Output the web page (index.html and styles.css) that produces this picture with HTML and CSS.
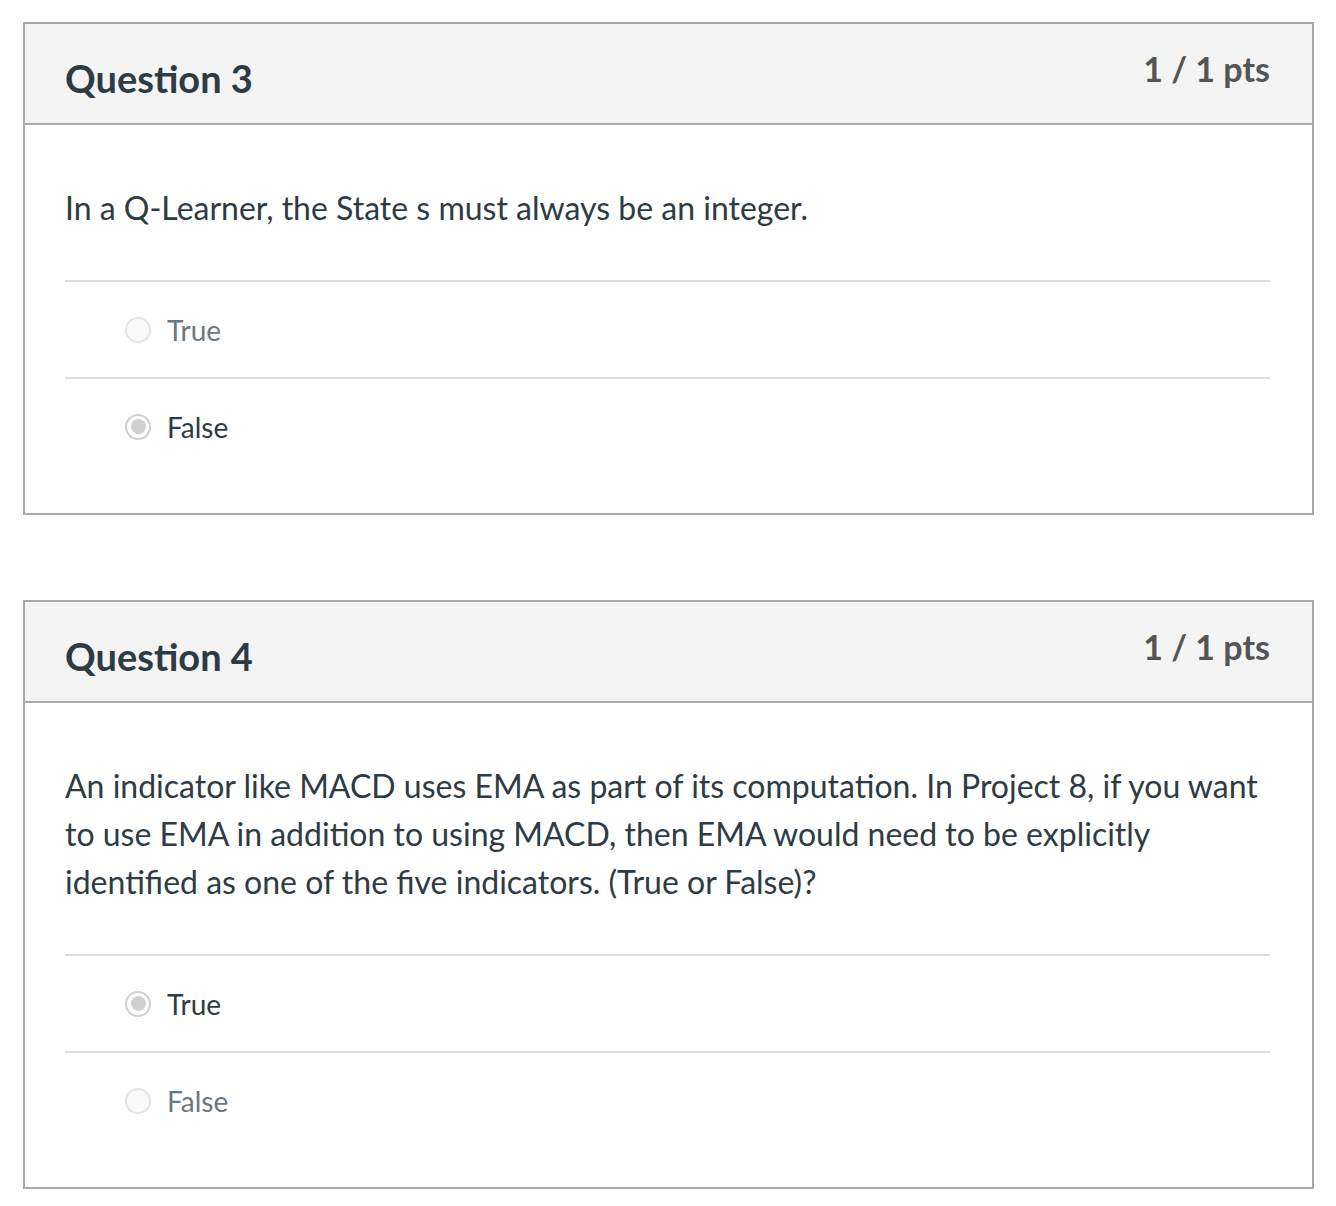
FILE: index.html
```html
<!DOCTYPE html>
<html>
<head>
<meta charset="utf-8">
<link rel="stylesheet" href="styles.css">
</head>
<body>
<div class="page">
  <div class="card">
    <div class="card-head">
      <div class="q-title">Question 3</div>
      <div class="q-pts">1 / 1 pts</div>
    </div>
    <div class="card-body">
      <div class="q-text">In a Q-Learner, the State s must always be an integer.</div>
      <div class="answer"><span class="radio"></span><span class="a-label">True</span></div>
      <div class="answer selected"><span class="radio"></span><span class="a-label">False</span></div>
    </div>
  </div>
  <div class="card">
    <div class="card-head">
      <div class="q-title">Question 4</div>
      <div class="q-pts">1 / 1 pts</div>
    </div>
    <div class="card-body">
      <div class="q-text">An indicator like MACD uses EMA as part of its computation. In Project 8, if you want to use EMA in addition to using MACD, then EMA would need to be explicitly identified as one of the five indicators. (True or False)?</div>
      <div class="answer selected"><span class="radio"></span><span class="a-label">True</span></div>
      <div class="answer"><span class="radio"></span><span class="a-label">False</span></div>
    </div>
  </div>
</div>
</body>
</html>
```
FILE: styles.css
```css
html, body {
  margin: 0;
  padding: 0;
  background: #fff;
}
body {
  font-family: Lato, "Open Sans", sans-serif;
  color: #2d3b45;
}
.page {
  padding: 22px 0 0 23px;
  display: flex;
  flex-direction: column;
  gap: 85px;
}
.card {
  width: 1287px;
  border: 2px solid #a9a9a9;
}
.card-head {
  height: 99px;
  background: #f4f4f4;
  border-bottom: 2px solid #a9a9a9;
  padding: 0 41px 0 40px;
  display: flex;
  justify-content: space-between;
  align-items: flex-start;
}
.q-title {
  font-size: 38px;
  font-weight: 700;
  line-height: 1.2;
  margin-top: 32px;
  color: #2d3b45;
}
.q-pts {
  font-size: 34px;
  font-weight: 700;
  line-height: 1.2;
  margin-top: 25px;
  margin-right: 1px;
  color: #555;
}
.card-body {
  padding: 59px 42px 39px 40px;
}
.q-text {
  font-size: 32px;
  line-height: 48px;
  margin-bottom: 48px;
}
.answer {
  height: 95px;
  border-top: 2px solid #dedede;
  display: flex;
  align-items: center;
  padding-left: 60px;
}
.radio {
  width: 22px;
  height: 22px;
  border-radius: 50%;
  border: 2px solid #e3e3e3;
  background: #fafafa;
  margin-right: 16px;
  display: flex;
  align-items: center;
  justify-content: center;
  flex: none;
}
.a-label {
  font-size: 28px;
  color: #6b7780;
}
.selected .radio {
  border-color: #cfcfcf;
  background: #fff;
}
.selected .radio::after {
  content: "";
  width: 15px;
  height: 15px;
  border-radius: 50%;
  background: #d0d0d0;
}
.selected .a-label {
  color: #2d3b45;
}
```
